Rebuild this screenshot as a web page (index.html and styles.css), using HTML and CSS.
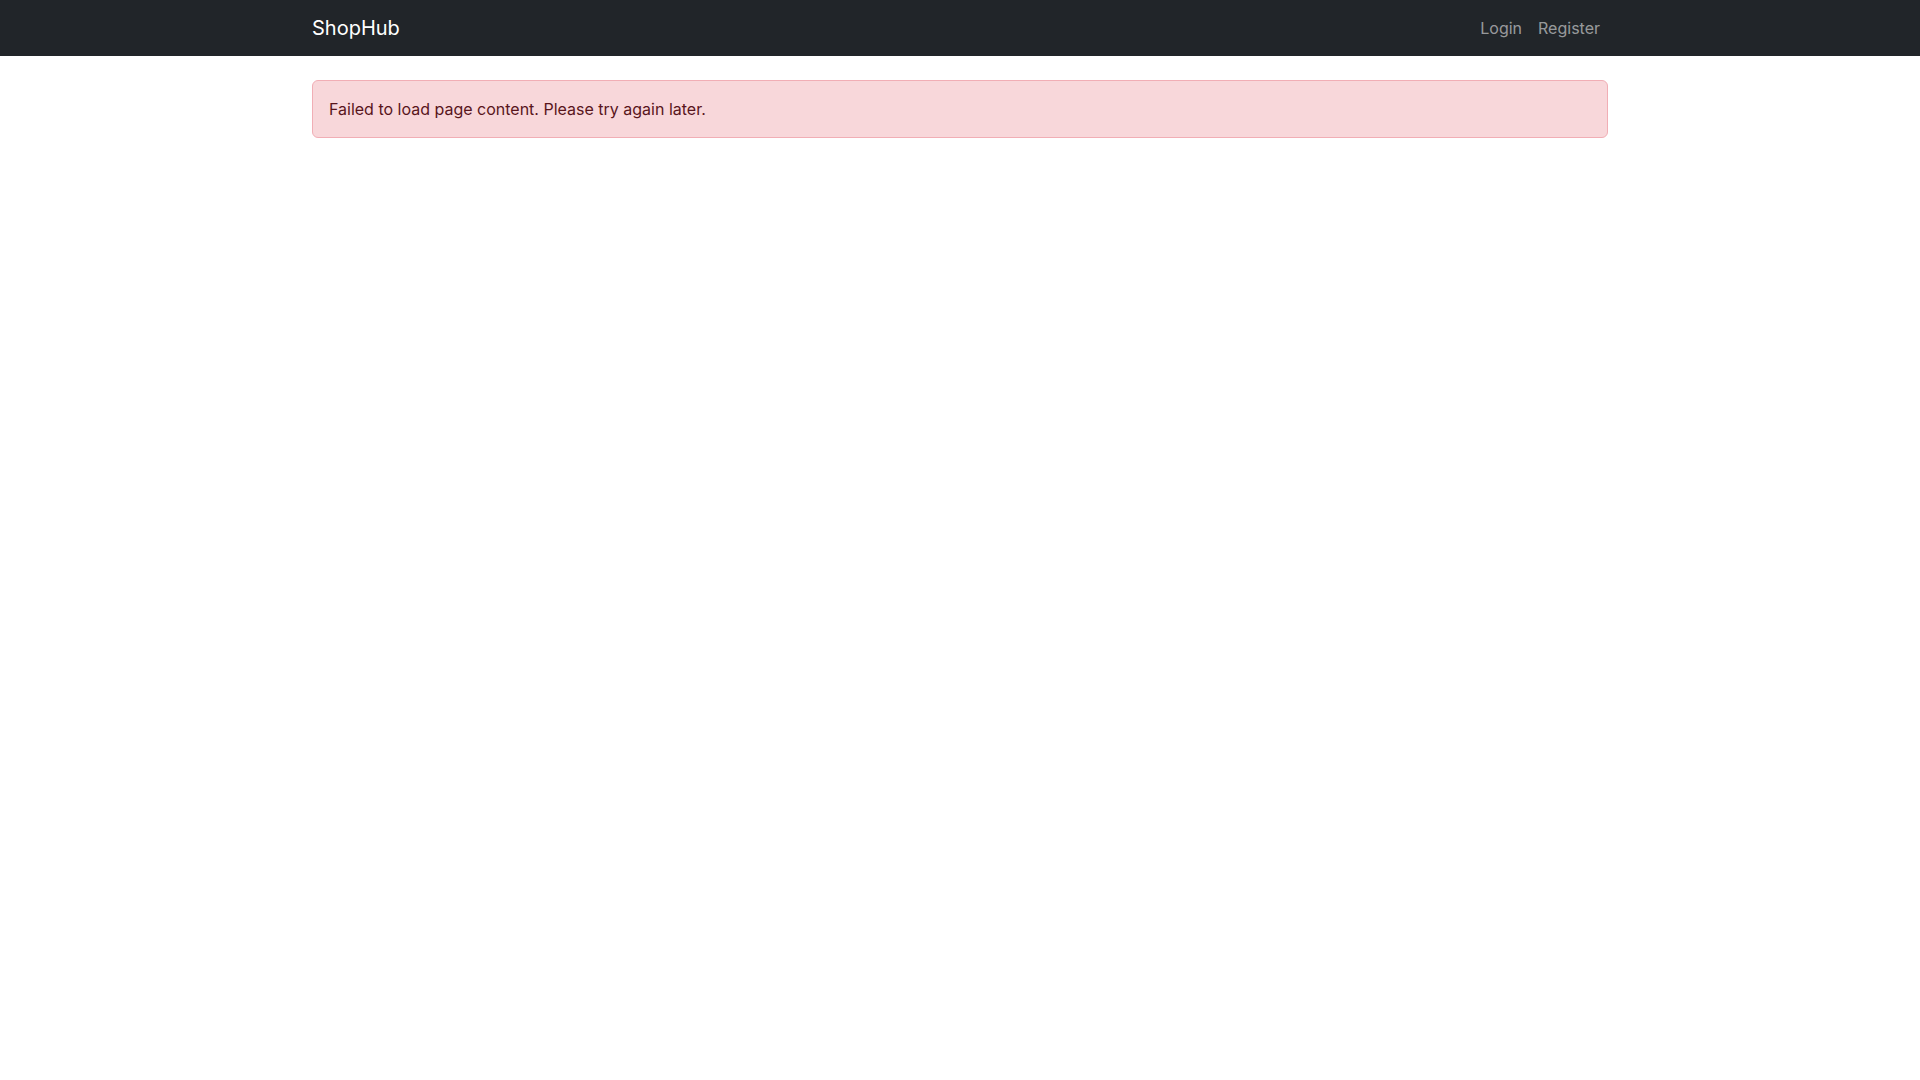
FILE: index.html
```html
<!DOCTYPE html>
<html lang="en">
<head>
<meta charset="utf-8">
<title>ShopHub</title>
<link rel="stylesheet" href="styles.css">
</head>
<body>
<nav class="navbar">
  <div class="container nav-inner">
    <a class="brand" href="#">ShopHub</a>
    <ul class="nav-links">
      <li><a class="nav-link" href="#">Login</a></li>
      <li><a class="nav-link" href="#">Register</a></li>
    </ul>
  </div>
</nav>
<main class="container main">
  <div class="alert">Failed to load page content. Please try again later.</div>
</main>
</body>
</html>
```
FILE: styles.css
```css
* { box-sizing: border-box; }
html, body { margin: 0; padding: 0; }
body {
  font-family: Inter, "Liberation Sans", sans-serif;
  font-size: 16px;
  line-height: 1.5;
  color: #212529;
  background: #fff;
}
.container {
  max-width: 1320px;
  margin: 0 auto;
  padding: 0 12px;
}
.navbar {
  background: #212529;
  padding: 8px 0;
}
.nav-inner {
  display: flex;
  align-items: center;
  justify-content: space-between;
}
.brand {
  color: #fff;
  text-decoration: none;
  font-size: 20px;
  line-height: 30px;
  padding: 5px 0;
  margin-right: 16px;
}
.nav-links {
  list-style: none;
  margin: 0;
  padding: 0;
  display: flex;
}
.nav-link {
  display: block;
  padding: 8px;
  color: rgba(255,255,255,0.55);
  text-decoration: none;
  line-height: 24px;
}
.main { padding-top: 24px; }
.alert {
  padding: 16px;
  background: #f8d7da;
  border: 1px solid #f1aeb5;
  color: #58151c;
  border-radius: 6px;
}
```
